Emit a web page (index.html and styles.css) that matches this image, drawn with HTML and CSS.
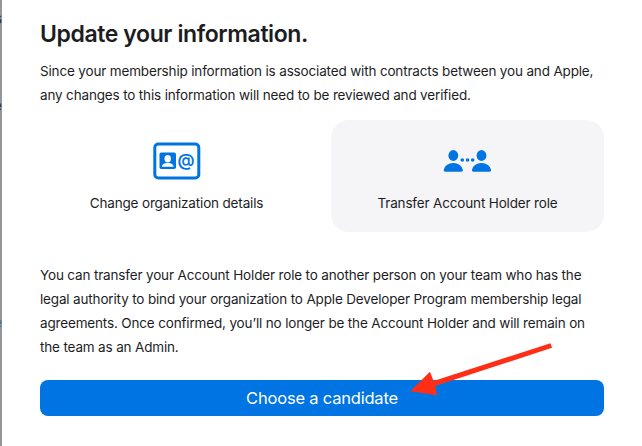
FILE: index.html
```html
<!DOCTYPE html>
<html lang="en">
<head>
    <meta charset="UTF-8">
    <meta name="viewport" content="width=device-width, initial-scale=1.0">
    <title>Update your information</title>
    <link rel="stylesheet" href="styles.css">
</head>
<body>

    <div class="page">
        <!-- Dimmed page behind the modal -->
        <div class="backdrop">
            <span class="peek peek-top">s</span>
            <span class="peek peek-middle">e</span>
            <span class="peek peek-link">e</span>
        </div>

        <div class="modal">
            <h1 class="title">Update your information.</h1>
            <p class="intro">
                Since your membership information is associated with contracts between you and Apple,<br>
                any changes to this information will need to be reviewed and verified.
            </p>

            <div class="options">
                <div class="option">
                    <svg class="option-icon" width="48" height="38" viewBox="0 0 48 38" fill="#0074e2">
                        <rect x="1.8" y="2" width="44" height="34" rx="3.5" fill="none" stroke="#0074e2" stroke-width="3"/>
                        <rect x="6.5" y="10.5" width="16.5" height="16.5" rx="1.8"/>
                        <ellipse cx="14.7" cy="16.8" rx="3.2" ry="3.7" fill="#fff"/>
                        <path d="M8.8 24.7c.2-2.6 2.8-3.7 5.9-3.7s5.7 1.1 5.9 3.7z" fill="#fff"/>
                        <text class="at" x="33" y="23.5" text-anchor="middle">@</text>
                    </svg>
                    <span class="option-label">Change organization details</span>
                </div>
                <div class="option selected">
                    <svg class="option-icon" width="48" height="38" viewBox="0.5 0 48 38" fill="#0074e2">
                        <ellipse cx="9.8" cy="13.5" rx="4.9" ry="5.4"/>
                        <path d="M2 29.8c-1.3 0-1.9-.6-1.7-1.7.6-4 4.6-7.1 9.5-7.1s8.9 3.1 9.5 7.1c.2 1.1-.4 1.7-1.7 1.7z"/>
                        <circle cx="18.8" cy="18" r="1.8"/>
                        <circle cx="24" cy="18" r="1.8"/>
                        <circle cx="29.2" cy="18" r="1.8"/>
                        <ellipse cx="38" cy="13.5" rx="4.9" ry="5.4"/>
                        <path d="M30.2 29.8c-1.3 0-1.9-.6-1.7-1.7.6-4 4.6-7.1 9.5-7.1s8.9 3.1 9.5 7.1c.2 1.1-.4 1.7-1.7 1.7z"/>
                    </svg>
                    <span class="option-label">Transfer Account Holder role</span>
                </div>
            </div>

            <p class="description">
                You can transfer your Account Holder role to another person on your team who has the<br>
                legal authority to bind your organization to Apple Developer Program membership legal<br>
                agreements. Once confirmed, you’ll no longer be the Account Holder and will remain on<br>
                the team as an Admin.
            </p>

            <button class="btn">Choose a candidate</button>
        </div>

        <!-- Arrow pointing at the button -->
        <svg class="arrow" width="150" height="60" viewBox="0 0 150 60" fill="#ff2e17">
            <path d="M0.3 51.3L20 31.8L23.5 41L140.5 3.3L142 7.8L25 46L27.3 55.3z"/>
        </svg>
    </div>

</body>
</html>
```
FILE: styles.css
```css
* {
    margin: 0;
    padding: 0;
    box-sizing: border-box;
    font-family: 'Inter', 'Liberation Sans', sans-serif;
}

body {
    background: #fff;
    color: #1d1d1f;
    overflow: hidden;
}

.page {
    position: relative;
    display: flex;
    width: 642px;
    height: 446px;
    overflow: hidden;
}

/* Dimmed page */
.backdrop {
    position: relative;
    width: 2px;
    height: 446px;
    background: #969698;
    overflow: hidden;
}

.peek {
    position: absolute;
    right: 0;
    font-size: 16px;
    line-height: 20px;
    font-weight: 600;
    color: #3a3a3c;
}

.peek-top {
    top: 8px;
}

.peek-middle {
    top: 95px;
}

.peek-link {
    top: 312px;
    font-weight: 400;
    color: #3f76ad;
}

/* Modal */
.modal {
    flex: 1;
    padding: 18px 38px 0;
}

.title {
    font-size: 23px;
    line-height: 32px;
    font-weight: 600;
    letter-spacing: -0.4px;
    white-space: nowrap;
}

.intro,
.description {
    font-size: 13.5px;
    line-height: 24px;
    letter-spacing: -0.16px;
    white-space: nowrap;
}

.intro {
    margin-top: 9px;
}

.options {
    display: flex;
    gap: 18px;
    margin-top: 13px;
}

.option {
    display: flex;
    flex-direction: column;
    align-items: center;
    width: 273px;
    height: 112px;
    padding-top: 22px;
    border-radius: 18px;
}

.option.selected {
    background: #f5f5f7;
}

.option-icon {
    display: block;
    overflow: visible;
}

.at {
    font-size: 17px;
    font-weight: 600;
}

.option-label {
    margin-top: 11px;
    font-size: 13.5px;
    line-height: 24px;
    letter-spacing: -0.16px;
}

.description {
    margin-top: 31px;
}

.btn {
    display: block;
    width: 564px;
    height: 36px;
    margin-top: 21px;
    border: none;
    border-radius: 8px;
    background: #0074e2;
    color: #fff;
    font-size: 16.5px;
    letter-spacing: -0.2px;
    cursor: pointer;
}

.arrow {
    position: absolute;
    top: 340px;
    left: 410px;
}
```
